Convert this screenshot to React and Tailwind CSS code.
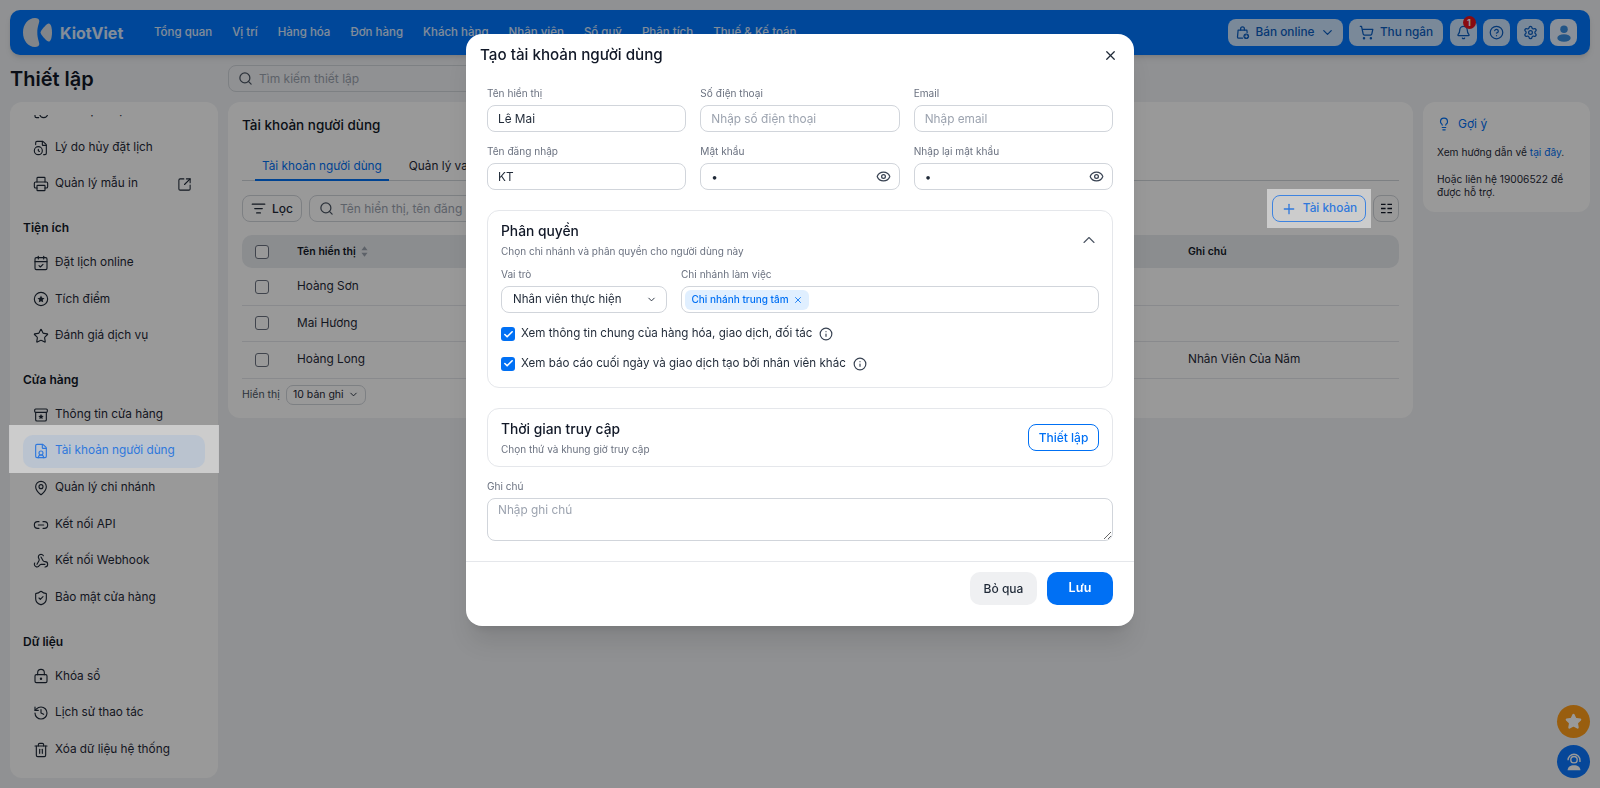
import React from 'react';
import {
  Search, FileClock, Printer, SquareArrowOutUpRight, CalendarCheck, Star, FileUser, MapPin, Link2,
  Webhook, ShieldCheck, LockKeyhole, History, Trash2, ListFilter, Plus, Lightbulb, Bell, CircleHelp,
  Settings, ChevronDown, ChevronUp, ShoppingCart, X, Eye, Info, Check,
  CalendarClock,
} from 'lucide-react';

const navItems = ['Tổng quan', 'Vị trí', 'Hàng hóa', 'Đơn hàng', 'Khách hàng', 'Nhân viên', 'Sổ quỹ', 'Phân tích', 'Thuế & Kế toán'];

function StarCircle(props) {
  return (
    <svg viewBox="0 0 24 24" fill="none" stroke="currentColor" strokeWidth="1.8" {...props}>
      <circle cx="12" cy="12" r="10" />
      <path fill="currentColor" stroke="none" d="M12 6.800l1.600 3.400 3.700.5-2.700 2.600.7 3.700-3.300-1.800-3.300 1.800.7-3.700-2.700-2.600 3.700-.5z" />
    </svg>
  );
}

// icon "Thông tin cửa hàng": hộp có nắp và ngôi sao nhỏ
function StoreBox(props) {
  return (
    <svg viewBox="0 0 24 24" fill="none" stroke="currentColor" strokeWidth="1.9" strokeLinejoin="round" {...props}>
      <rect x="2.500" y="3" width="19" height="5" rx="1.500" />
      <path d="M4 8v11a2 2 0 002 2h12a2 2 0 002-2V8" />
      <path fill="currentColor" stroke="none" d="M12 10.500l1.300 2.500 2.700.4-2 1.900.5 2.700-2.500-1.300-2.500 1.300.5-2.700-2-1.900 2.700-.4z" />
    </svg>
  );
}

function BagPlus(props) {
  return (
    <svg viewBox="0 0 24 24" fill="none" stroke="currentColor" strokeWidth="2" strokeLinecap="round" strokeLinejoin="round" {...props}>
      <path d="M12 21H6a2 2 0 01-2-2l1-11h14l.4 4" />
      <path d="M9 8V6a3 3 0 016 0v2" />
      <circle cx="18" cy="18" r="4.500" fill="currentColor" stroke="none" />
      <path d="M18 16v4M16 18h4" stroke="white" strokeWidth="1.200" />
    </svg>
  );
}

const sidebarGroups = [
  {
    items: [
      { label: 'Nhắc lịch hẹn', icon: CalendarClock },
      { label: 'Lý do hủy đặt lịch', icon: FileClock },
      { label: 'Quản lý mẫu in', icon: Printer, external: true },
    ],
  },
  {
    title: 'Tiện ích',
    items: [
      { label: 'Đặt lịch online', icon: CalendarCheck },
      { label: 'Tích điểm', icon: StarCircle },
      { label: 'Đánh giá dịch vụ', icon: Star },
    ],
  },
  {
    title: 'Cửa hàng',
    items: [
      { label: 'Thông tin cửa hàng', icon: StoreBox },
      { label: 'Tài khoản người dùng', icon: FileUser, active: true },
      { label: 'Quản lý chi nhánh', icon: MapPin },
      { label: 'Kết nối API', icon: Link2 },
      { label: 'Kết nối Webhook', icon: Webhook },
      { label: 'Bảo mật cửa hàng', icon: ShieldCheck },
    ],
  },
  {
    title: 'Dữ liệu',
    items: [
      { label: 'Khóa sổ', icon: LockKeyhole },
      { label: 'Lịch sử thao tác', icon: History },
      { label: 'Xóa dữ liệu hệ thống', icon: Trash2 },
    ],
  },
];

const rows = [
  { name: 'Hoàng Sơn', note: '' },
  { name: 'Mai Hương', note: '' },
  { name: 'Hoàng Long', note: 'Nhân Viên Của Năm' },
];

function Logo() {
  return (
    <div className="flex items-center gap-[8px] w-[144px] pl-[13px] shrink-0">
      <svg viewBox="0 0 29 29" className="w-[29px] h-[29px] shrink-0" fill="#d9dee5">
        <path d="M12 0C5 0 0 6.500 0 14.500S5 29 12 29c2.500 0 4.300-1 4.300-3 0-2-2-5.500-2-11.500s2-9.500 2-11.500c0-2-1.800-3-4.300-3z" />
        <path d="M17.500 14.500c0-1.500 5-8 8-9 2-.6 3.500 3.500 3.500 9s-1.500 9.600-3.500 9c-3-1-8-7.500-8-9z" />
      </svg>
      <span className="text-[16px] font-bold text-white/85">KiotViet</span>
    </div>
  );
}

function HeaderButton({ children, className = '' }) {
  return (
    <div className={`h-[27px] rounded-[8px] bg-white/80 flex items-center justify-center text-[#0a5ec2] ${className}`}>
      {children}
    </div>
  );
}

function Header() {
  return (
    <header className="h-[45px] rounded-[10px] bg-[#0077ff] flex items-center pr-[13px] shadow-md">
      <Logo />
      <nav className="flex items-center gap-[20px] text-[11.500px] font-medium text-white/85">
        {navItems.map((item) => (
          <span key={item}>{item}</span>
        ))}
      </nav>
      <div className="ml-auto flex items-center gap-[6.500px]">
        <HeaderButton className="w-[115px] gap-[6px] text-[11.800px] font-medium">
          <BagPlus className="w-[15px] h-[15px]" />
          Bán online
          <ChevronDown size={15} />
        </HeaderButton>
        <HeaderButton className="w-[94px] gap-[6px] text-[11.800px] font-medium">
          <ShoppingCart size={15} />
          Thu ngân
        </HeaderButton>
        <HeaderButton className="w-[27px] relative">
          <Bell size={15} />
          <span className="absolute -top-[3px] right-[1px] w-[13px] h-[13px] rounded-full bg-[#e5131d] text-white text-[9px] font-bold flex items-center justify-center">1</span>
        </HeaderButton>
        <HeaderButton className="w-[27px]"><CircleHelp size={15} /></HeaderButton>
        <HeaderButton className="w-[27px]"><Settings size={15} /></HeaderButton>
        <HeaderButton className="w-[27px] !bg-white/90">
          <svg viewBox="0 0 24 24" className="w-[20px] h-[20px]" fill="#3b8ee0">
            <circle cx="12" cy="7.500" r="4.500" />
            <ellipse cx="12" cy="18" rx="8" ry="4.500" />
          </svg>
        </HeaderButton>
      </div>
    </header>
  );
}

function Sidebar() {
  return (
    <aside className="h-[676px] rounded-[12px] bg-white pt-[13px] overflow-hidden">
      <div className="h-[650px] overflow-hidden">
        <div className="-mt-[20.500px] px-[13px]">
          {sidebarGroups.map((group, idx) => (
            <div key={idx}>
              {group.title && (
                <div className="mt-[17.500px] mb-[8px] h-[20px] leading-[20px] text-[12px] font-semibold text-[#111827]">{group.title}</div>
              )}
              {group.items.map((item) => {
                const Icon = item.icon;
                return (
                  <div
                    key={item.label}
                    className={`h-[33px] mb-[3.670px] rounded-[10px] pl-[10px] pr-[13px] flex items-center gap-[6px] text-[11.800px] ${
                      item.active ? 'relative z-[25] bg-[#bac3cf] text-[#2f78dc]' : 'text-[#1f2937]'
                    }`}
                  >
                    <Icon className="w-[16px] h-[16px] shrink-0" strokeWidth={1.7} />
                    <span>{item.label}</span>
                    {item.external && <SquareArrowOutUpRight className="w-[15px] h-[15px] ml-auto" strokeWidth={1.7} />}
                  </div>
                );
              })}
            </div>
          ))}
        </div>
      </div>
    </aside>
  );
}

function Checkbox() {
  return <span className="block w-[14px] h-[14px] rounded-[3px] border border-[#6b7280] bg-white" />;
}

function UserCard() {
  return (
    <section className="rounded-[12px] bg-white h-[316px] px-[14px] pt-[13px]">
      <h2 className="h-[20px] leading-[20px] text-[13.500px] font-medium text-[#111827]">Tài khoản người dùng</h2>

      <div className="mt-[16px] h-[30px] border-b border-[#d1d5db] flex items-start pl-[13px] text-[11.800px]">
        <div className="h-[30px] px-[7px] border-b-2 border-[#0070f4] text-[#0070f4] leading-[30px]">Tài khoản người dùng</div>
        <div className="ml-[13px] px-[7px] leading-[30px] text-[#1f2937]">Quản lý vai trò</div>
      </div>

      <div className="mt-[14px] h-[27px] flex items-center">
        <div className="w-[60px] h-[27px] rounded-[8px] border border-[#d1d5db] flex items-center justify-center gap-[6px] text-[12px] text-[#1f2937]">
          <ListFilter size={15} />
          <span className="font-medium">Lọc</span>
        </div>
        <div className="ml-[7px] w-[420px] h-[27px] rounded-[8px] border border-[#d1d5db] flex items-center pl-[9px] gap-[6px] text-[12px] text-[#9ca3af]">
          <Search size={15} className="text-[#4b5563]" />
          Tên hiển thị, tên đăng nhập
        </div>
        <div className="relative z-[25] ml-auto w-[94px] h-[27px] rounded-[8px] border border-[#3d83e0] flex items-center justify-center gap-[6px] text-[11.800px] font-medium text-[#2f78dc]">
          <Plus size={16} />
          Tài khoản
        </div>
        <div className="ml-[7px] w-[26px] h-[27px] rounded-[8px] border border-[#d1d5db] flex items-center justify-center">
          <svg viewBox="0 0 14 12" className="w-[13px] h-[11px]" stroke="#111827" strokeWidth="1.400">
            <path d="M1 1.500h5M8 1.500h5M1 6h5M8 6h5M1 10.500h5M8 10.500h5" />
          </svg>
        </div>
      </div>

      <div className="mt-[13px] mb-[1px] h-[33px] rounded-[10px] bg-[#e8ebef] grid grid-cols-[42px_891px_1fr] items-center pl-[13px] text-[10.500px] font-semibold text-[#111827]">
        <div><Checkbox /></div>
        <div className="flex items-center gap-[5px]">
          Tên hiển thị
          <svg viewBox="0 0 8 12" className="w-[7px] h-[11px]" fill="#9ca3af">
            <path d="M4 0l3.500 4.500h-7zM4 12L.5 7.500h7z" />
          </svg>
        </div>
        <div>Ghi chú</div>
      </div>

      {rows.map((row) => (
        <div key={row.name} className="h-[36.670px] border-b border-[#e5e7eb] grid grid-cols-[42px_891px_1fr] items-center pl-[13px] text-[11.800px] text-[#1f2937]">
          <div><Checkbox /></div>
          <div>{row.name}</div>
          <div>{row.note}</div>
        </div>
      ))}

      <div className="mt-[6px] flex items-center gap-[6px] text-[10.500px] text-[#4b5563]">
        Hiển thị
        <div className="h-[20px] w-[80px] rounded-[7px] border border-[#d1d5db] flex items-center justify-center gap-[4px] text-[#1f2937]">
          10 bản ghi
          <ChevronDown size={11} />
        </div>
      </div>
    </section>
  );
}

function HintCard() {
  return (
    <aside className="h-[110px] rounded-[12px] bg-white pl-[14px] pr-[10px] pt-[13px]">
      <div className="h-[18px] flex items-center gap-[7px] text-[12px] text-[#0070f4]">
        <Lightbulb size={14} />
        Gợi ý
      </div>
      <p className="mt-[13px] text-[10.200px] leading-[13px] text-[#1f2937]">
        Xem hướng dẫn về <span className="text-[#0070f4]">tại đây</span>.
      </p>
      <p className="mt-[14px] text-[10.200px] leading-[13px] text-[#1f2937]">Hoặc liên hệ 19006522 để được hỗ trợ.</p>
    </aside>
  );
}

function Field({ label, value, placeholder, password }) {
  return (
    <label className="block">
      <span className="block h-[15px] leading-[15px] mb-[4px] text-[10.100px] text-[#6b7280]">{label}</span>
      <div className="relative">
        <input
          readOnly
          type={password ? 'password' : 'text'}
          value={value || ''}
          placeholder={placeholder}
          className="block w-full h-[27px] rounded-[8px] border border-[#d1d5db] px-[10px] text-[11.800px] text-[#1f2937] placeholder:text-[#9ca3af] outline-none"
        />
        {password && <Eye size={15} className="absolute right-[9px] top-[6px] text-[#374151]" />}
      </div>
    </label>
  );
}

function CheckRow({ text }) {
  return (
    <div className="h-[14px] flex items-center gap-[6px] text-[11.600px] text-[#1f2937]">
      <span className="w-[14px] h-[14px] rounded-[3px] bg-[#0070f4] flex items-center justify-center">
        <Check size={11} strokeWidth={3.500} className="text-white" />
      </span>
      {text}
      <Info size={14} className="ml-[1px] text-[#374151]" />
    </div>
  );
}

function Modal() {
  return (
    <div className="fixed inset-0 z-30 flex justify-center pt-[34px]">
      <div className="w-[668px] h-[592px] rounded-[16px] bg-white shadow-xl flex flex-col">
        <div className="h-[42px] flex items-center justify-between pl-[14px] pr-[16px]">
          <h1 className="text-[15.200px] font-medium text-[#111827]">Tạo tài khoản người dùng</h1>
          <X size={15} className="text-[#1f2937]" />
        </div>

        <div className="px-[21px] pt-[10px]">
          <div className="grid grid-cols-3 gap-x-[14px] gap-y-[12px]">
            <Field label="Tên hiển thị" value="Lê Mai" />
            <Field label="Số điện thoại" placeholder="Nhập số điện thoại" />
            <Field label="Email" placeholder="Nhập email" />
            <Field label="Tên đăng nhập" value="KT" />
            <Field label="Mật khẩu" value="1" password />
            <Field label="Nhập lại mật khẩu" value="1" password />
          </div>

          {/* Phân quyền */}
          <section className="mt-[20px] h-[178px] rounded-[12px] border border-[#e5e7eb] px-[13px] pt-[10px]">
            <div className="flex items-center justify-between">
              <div>
                <h3 className="h-[20px] leading-[20px] text-[13.800px] font-medium text-[#111827]">Phân quyền</h3>
                <p className="h-[14px] leading-[14px] mt-[3px] text-[10px] text-[#6b7280]">Chọn chi nhánh và phân quyền cho người dùng này</p>
              </div>
              <ChevronUp size={20} strokeWidth={1.300} className="text-[#4b5563]" />
            </div>
            <div className="mt-[9px] grid grid-cols-[166px_1fr] gap-x-[14px]">
              <div>
                <div className="h-[15px] leading-[15px] mb-[4px] text-[10.100px] text-[#6b7280]">Vai trò</div>
                <div className="h-[27px] rounded-[8px] border border-[#d1d5db] pl-[11px] pr-[9px] flex items-center justify-between text-[11.500px] text-[#1f2937]">
                  Nhân viên thực hiện
                  <ChevronDown size={11} />
                </div>
              </div>
              <div>
                <div className="h-[15px] leading-[15px] mb-[4px] text-[10.100px] text-[#6b7280]">Chi nhánh làm việc</div>
                <div className="h-[27px] rounded-[8px] border border-[#d1d5db] pl-[3px] flex items-center">
                  <span className="h-[20px] w-[124px] rounded-[6px] bg-[#e0efff] text-[#0070f4] text-[10px] font-medium flex items-center justify-center gap-[4px]">
                    Chi nhánh trung tâm
                    <X size={10} />
                  </span>
                </div>
              </div>
            </div>
            <div className="mt-[14px]">
              <CheckRow text="Xem thông tin chung của hàng hóa, giao dịch, đối tác" />
            </div>
            <div className="mt-[15.600px]">
              <CheckRow text="Xem báo cáo cuối ngày và giao dịch tạo bởi nhân viên khác" />
            </div>
          </section>

          {/* Thời gian truy cập */}
          <section className="mt-[20px] h-[59px] rounded-[12px] border border-[#e5e7eb] px-[13px] flex items-center justify-between">
            <div>
              <h3 className="h-[20px] leading-[20px] text-[13.800px] font-medium text-[#111827]">Thời gian truy cập</h3>
              <p className="h-[14px] leading-[14px] mt-[3px] text-[10px] text-[#6b7280]">Chọn thứ và khung giờ truy cập</p>
            </div>
            <div className="w-[71px] h-[27px] rounded-[8px] border border-[#0070f4] text-[#0070f4] text-[12px] font-medium flex items-center justify-center">Thiết lập</div>
          </section>

          <div className="mt-[12px]">
            <div className="h-[15px] leading-[15px] mb-[4px] text-[10.100px] text-[#6b7280]">Ghi chú</div>
            <textarea
              readOnly
              placeholder="Nhập ghi chú"
              className="block w-full h-[43px] rounded-[8px] border border-[#d1d5db] px-[10px] py-[3px] text-[11.800px] placeholder:text-[#9ca3af] outline-none"
            />
          </div>
        </div>

        <div className="mt-[20px] border-t border-[#e5e7eb] flex justify-end gap-[10px] px-[21px] pt-[10px]">
          <div className="w-[67px] h-[33px] rounded-[10px] bg-[#eff0f2] text-[12px] font-medium text-[#1f2937] flex items-center justify-center">Bỏ qua</div>
          <div className="w-[66px] h-[33px] rounded-[10px] bg-[#0070f4] text-[12.500px] font-semibold text-white flex items-center justify-center">Lưu</div>
        </div>
      </div>
    </div>
  );
}

export default function App() {
  return (
    <div className="relative h-[788px] overflow-hidden bg-[#f0f2f5] p-[10px] font-[family-name:Inter,'Noto_Sans',sans-serif]">
      <Header />

      {/* Hàng tiêu đề + ô tìm kiếm */}
      <div className="h-[37px] pt-[10px] flex items-center gap-[10px]">
        <h1 className="w-[208px] text-[20px] font-semibold text-[#111827]">Thiết lập</h1>
        <div className="w-[420px] h-[27px] rounded-[8px] border border-[#d1d5db] flex items-center pl-[9px] gap-[6px] text-[12px] text-[#9ca3af]">
          <Search size={15} className="text-[#4b5563]" />
          Tìm kiếm thiết lập
        </div>
      </div>

      <div className="mt-[10px] grid grid-cols-[208px_1185px_167px] gap-x-[10px] items-start">
        <Sidebar />
        <UserCard />
        <HintCard />
      </div>

      {/* Nút nổi góc phải */}
      <div className="absolute right-[10px] bottom-[10px] flex flex-col gap-[7px]">
        <div className="w-[33px] h-[33px] rounded-full bg-[#ff9d1a] flex items-center justify-center">
          <Star size={17} fill="white" className="text-white" />
        </div>
        <div className="w-[33px] h-[33px] rounded-full bg-[#0a77ff] flex items-center justify-center">
          <svg viewBox="0 0 24 24" className="w-[22px] h-[22px]" fill="none" stroke="white" strokeWidth="1.500">
            <circle cx="12" cy="9.500" r="3.500" />
            <path d="M5.500 10a6.500 6.500 0 0113 0v2" />
            <path fill="white" stroke="none" d="M5 21c0-3.500 3-5.500 7-5.500s7 2 7 5.500z" />
          </svg>
        </div>
      </div>

      {/* Lớp phủ */}
      <div className="absolute inset-0 z-10 bg-black/40" />
      <div className="absolute z-20 left-[9px] top-[425px] w-[210px] h-[48px] bg-white/50" />
      <div className="absolute z-20 left-[1267px] top-[189px] w-[104px] h-[39px] bg-white/50" />

      <Modal />
    </div>
  );
}
